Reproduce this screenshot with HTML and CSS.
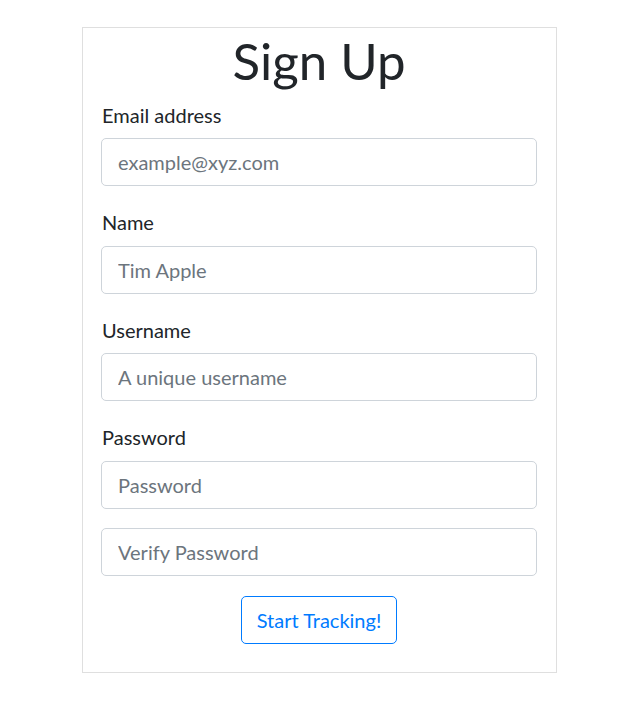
FILE: index.html
```html
<!DOCTYPE html>
<html>
<head>
<meta charset="utf-8">
<link rel="stylesheet" href="styles.css">
</head>
<body>
<div class="card">
  <h1 class="title">Sign Up</h1>
  <form class="form">
    <div class="group">
      <label class="label">Email address</label>
      <input class="input" type="email" placeholder="example@xyz.com">
    </div>
    <div class="group">
      <label class="label">Name</label>
      <input class="input" type="text" placeholder="Tim Apple">
    </div>
    <div class="group">
      <label class="label">Username</label>
      <input class="input" type="text" placeholder="A unique username">
    </div>
    <div class="group">
      <label class="label">Password</label>
      <input class="input" type="password" placeholder="Password">
    </div>
    <div class="group">
      <input class="input" type="password" placeholder="Verify Password">
    </div>
    <div class="actions">
      <button class="btn" type="button">Start Tracking!</button>
    </div>
  </form>
</div>
</body>
</html>
```
FILE: styles.css
```css
html, body {
  margin: 0;
  padding: 0;
  background: #fff;
}
body {
  font-family: Lato, "Open Sans", sans-serif;
  color: #212529;
  padding-top: 27px;
}
.card {
  box-sizing: border-box;
  width: 475px;
  margin-left: 82px;
  border: 1px solid #dfdfdf;
  padding: 0 19px 28.6px 18px;
}
.title {
  margin: 0 0 4.6px;
  text-align: center;
  font-size: 51px;
  font-weight: 400;
  line-height: 65px;
}
.form {
  display: flex;
  flex-direction: column;
  gap: 19px;
}
.group {
  display: flex;
  flex-direction: column;
}
.label {
  font-size: 20px;
  line-height: 30px;
  padding: 2px 0 0 1px;
  margin-bottom: 8.5px;
}
.input {
  box-sizing: border-box;
  width: 100%;
  height: 48px;
  margin: 0;
  padding: 8px 16px;
  border: 1px solid #ced4da;
  border-radius: 5px;
  font-family: inherit;
  font-size: 20px;
  color: #495057;
  outline: none;
}
.input::placeholder {
  color: #6c757d;
  opacity: 1;
}
.actions {
  display: flex;
  justify-content: center;
  padding-top: 1px;
}
.btn {
  box-sizing: border-box;
  height: 48px;
  padding: 0 15px;
  border: 1px solid #007bff;
  border-radius: 5px;
  background: #fff;
  color: #007bff;
  font-family: inherit;
  font-size: 20px;
  cursor: pointer;
}
```
